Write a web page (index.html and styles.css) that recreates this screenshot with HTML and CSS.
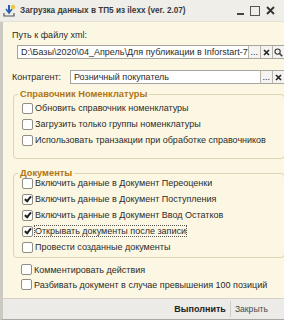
FILE: index.html
```html
<!DOCTYPE html>
<html lang="ru">
<head>
<meta charset="utf-8">
<link rel="stylesheet" href="styles.css">
</head>
<body>
<div class="window">
  <div class="titlebar">
    <svg class="app-icon" width="13" height="13" viewBox="0 0 13 13">
      <path d="M6 1 L6 8" stroke="#2a5fb0" stroke-width="2"/>
      <path d="M3 5 L6 9 L9 5" fill="none" stroke="#2a5fb0" stroke-width="1.6"/>
      <path d="M1 9 L1 12 L11 12 L11 9" fill="none" stroke="#555" stroke-width="1.2"/>
      <circle cx="10" cy="3" r="2.2" fill="#f3c53a"/>
    </svg>
    <span class="title">Загрузка данных в ТП5 из ilexx (ver. 2.07)</span>
    <div class="controls">
      <span class="ctl-min"></span>
      <span class="ctl-max"></span>
      <svg class="ctl-close" width="9" height="9" viewBox="0 0 9 9"><path d="M1 1 L8 8 M8 1 L1 8" stroke="#333" stroke-width="1.8"/></svg>
    </div>
  </div>
  <div class="body">
    <div class="content">
      <div class="caption">Путь к файлу xml:</div>
      <div class="field field-path">
        <div class="input">D:\Базы\2020\04_Апрель\Для публикации в Inforstart-7</div>
        <div class="btn">...</div>
        <div class="btn"><svg width="7" height="7" viewBox="0 0 7 7"><path d="M1 1 L6 6 M6 1 L1 6" stroke="#222" stroke-width="1.6"/></svg></div>
        <div class="btn"><svg width="9" height="9" viewBox="0 0 9 9"><circle cx="3.6" cy="3.6" r="2.6" fill="none" stroke="#333" stroke-width="1.1"/><path d="M5.5 5.5 L8.3 8.3" stroke="#333" stroke-width="1.5"/></svg></div>
      </div>
      <div class="row-contractor">
        <span class="caption-inline">Контрагент:</span>
        <div class="field field-contractor">
          <div class="input">Розничный покупатель</div>
          <div class="btn">...</div>
          <div class="btn"><svg width="7" height="7" viewBox="0 0 7 7"><path d="M1 1 L6 6 M6 1 L1 6" stroke="#222" stroke-width="1.6"/></svg></div>
        </div>
      </div>

      <div class="group group-nom">
        <div class="legend">Справочник Номенклатуры</div>
        <div class="check"><span class="box"></span><span>Обновить справочник номенклатуры</span></div>
        <div class="check"><span class="box"></span><span>Загрузить только группы номенклатуры</span></div>
        <div class="check"><span class="box"></span><span>Использовать транзакции при обработке справочников</span></div>
      </div>

      <div class="group group-docs">
        <div class="legend">Документы</div>
        <div class="check"><span class="box"></span><span>Включить данные в Документ Переоценки</span></div>
        <div class="check"><span class="box checked"></span><span>Включить данные в Документ Поступления</span></div>
        <div class="check"><span class="box checked"></span><span>Включить данные в Документ Ввод Остатков</span></div>
        <div class="check"><span class="box checked"></span><span class="focus">Открывать документы после записи</span></div>
        <div class="check"><span class="box"></span><span>Провести созданные документы</span></div>
      </div>

      <div class="loose">
        <div class="check"><span class="box"></span><span>Комментировать действия</span></div>
        <div class="check"><span class="box"></span><span>Разбивать документ в случае превышения 100 позиций</span></div>
      </div>
    </div>
    <div class="frame-right"></div>
  </div>
  <div class="footer">
    <span class="fbtn fbtn-main">Выполнить</span>
    <span class="fsep"></span>
    <span class="fbtn fbtn-close">Закрыть</span>
  </div>
</div>
</body>
</html>
```
FILE: styles.css
```css
html, body {
  margin: 0;
  padding: 0;
}
body {
  width: 284px;
  height: 320px;
  overflow: hidden;
  background: #f2f1ec;
  font-family: "Liberation Sans", Arial, sans-serif;
  font-size: 9px;
  color: #2b2b2b;
}
.window {
  display: flex;
  flex-direction: column;
  width: 284px;
  height: 320px;
}
.titlebar {
  height: 21px;
  flex: none;
  display: flex;
  align-items: center;
  background: #efeee9;
  padding: 0 9px 0 3px;
  border-bottom: 1px solid #e4e1d6;
}
.app-icon {
  flex: none;
  margin-right: 4px;
}
.title {
  font-weight: bold;
  font-size: 8.2px;
  color: #3a3a3a;
  white-space: nowrap;
}
.controls {
  margin-left: auto;
  display: flex;
  align-items: center;
  gap: 6px;
}
.ctl-min {
  width: 7px;
  height: 2px;
  background: #444;
  margin-top: 7px;
}
.ctl-max {
  width: 8px;
  height: 8px;
  border: 1px solid #555;
}
.body {
  flex: 1;
  display: flex;
  min-height: 0;
  overflow: hidden;
  border-left: 3px solid #cbc9c2;
}
.content {
  flex: 1;
  background: #fcf7e2;
  padding: 7px 6px 0 9px;
  display: flex;
  flex-direction: column;
}
.frame-right {
  width: 6px;
  flex: none;
  background: #f1f0ec;
  border-left: 1px solid #9d9b95;
  box-shadow: inset -2px 0 0 #f1f0ec, inset -3px 0 0 #a9a7a0;
}
.caption {
  height: 12px;
  line-height: 12px;
}
.field {
  display: flex;
  height: 12px;
  border: 1px solid #a7a59e;
  background: #fff;
}
.field-path {
  margin: 4px 0 0 5px;
}
.input {
  flex: 1;
  padding-left: 3px;
  line-height: 12px;
  white-space: nowrap;
  overflow: hidden;
}
.btn {
  width: 11px;
  flex: none;
  border-left: 1px solid #b6b4ad;
  background: #f4f3ef;
  display: flex;
  align-items: center;
  justify-content: center;
  line-height: 10px;
  font-size: 9px;
}
.row-contractor {
  display: flex;
  align-items: center;
  margin-top: 11px;
}
.caption-inline {
  width: 58px;
  flex: none;
}
.field-contractor {
  flex: 1;
}
.group {
  position: relative;
  margin: 10px 0 0 1px;
  border: 1px solid #ddd5b6;
  border-radius: 4px;
  padding: 5px 0 10px 8px;
}
.group-docs {
  margin-top: 14px;
  padding-top: 1px;
  padding-bottom: 2px;
}
.legend {
  position: absolute;
  top: -7px;
  left: 4px;
  padding: 0 2px;
  background: #fcf7e2;
  font-weight: bold;
  font-size: 9.3px;
  color: #b27512;
  line-height: 12px;
}
.check {
  display: flex;
  align-items: center;
  height: 16px;
  white-space: nowrap;
}
.box {
  width: 9px;
  height: 9px;
  border: 1px solid #8f8d86;
  border-radius: 2px;
  background: #fff;
  margin-right: 2px;
  flex: none;
  position: relative;
}
.box.checked::after {
  content: "";
  position: absolute;
  left: 3px;
  top: 0px;
  width: 2px;
  height: 5px;
  border: solid #222;
  border-width: 0 2px 2px 0;
  transform: rotate(40deg);
}
.focus {
  outline: 1px dotted #555;
  outline-offset: 0;
}
.loose {
  margin: 4px 0 0 9px;
}
.loose .check {
  height: 15px;
}
.footer {
  height: 20px;
  flex: none;
  display: flex;
  align-items: center;
  justify-content: flex-end;
  background: #ecebe7;
  border-top: 1px solid #d3d1ca;
  border-bottom: 1px solid #a9a7a1;
  border-left: 3px solid #cbc9c2;
  padding-right: 13px;
}
.fbtn {
  font-size: 9px;
  color: #444;
  padding: 0 3px;
}
.fbtn-main {
  font-weight: bold;
  color: #222;
}
.fbtn-close {
  font-size: 8.6px;
  color: #4a4a4a;
}
.fsep {
  width: 1px;
  height: 16px;
  background: #cfcdc6;
  margin: 0 1px;
}
```
